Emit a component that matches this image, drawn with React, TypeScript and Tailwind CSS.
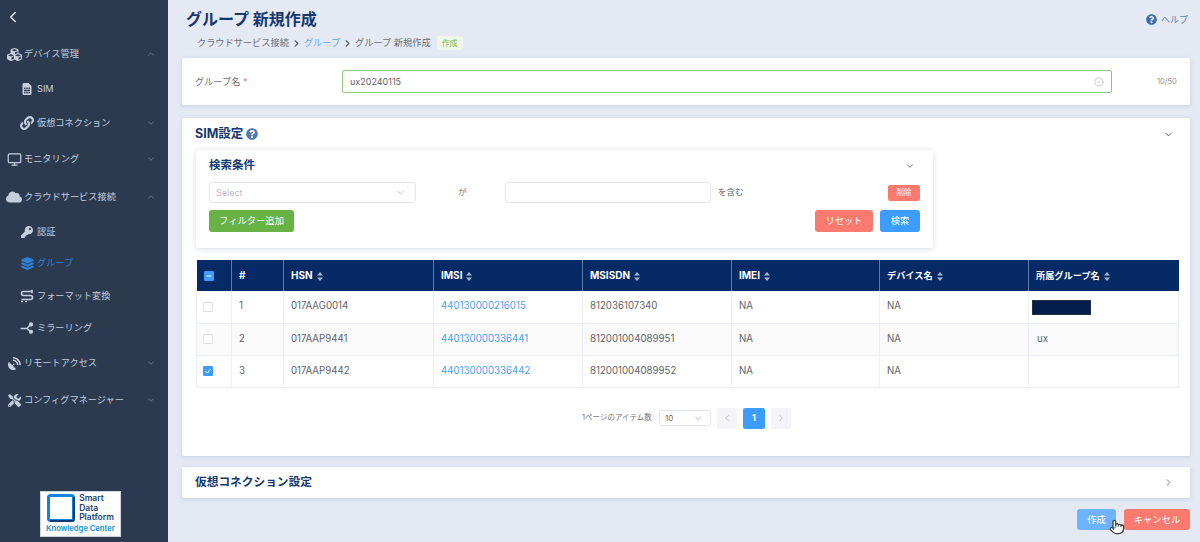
import { ChevronDown, ChevronLeft, ChevronRight, ChevronUp, CircleCheck, Monitor, Pointer } from "lucide-react";
import { FaCloud, FaCubes, FaKey, FaLayerGroup, FaLink, FaQuestionCircle, FaSatelliteDish, FaSimCard, FaTools } from "react-icons/fa";
import type { ReactNode } from "react";

const fontStack = "font-['Inter','Noto_Sans_CJK_JP',sans-serif]";

function FormatIcon() {
  return (
    <svg width="14" height="14" viewBox="0 0 14 14" fill="none" stroke="currentColor" strokeWidth="1.6">
      <path d="M12 2.5H3.5a2 2 0 0 0 0 4h7a2 2 0 0 1 0 4H1.5" />
      <path d="M1 12.5h2M5 12.5h2M12 .8v3.4" />
    </svg>
  );
}

function MirrorIcon() {
  return (
    <svg width="14" height="14" viewBox="0 0 14 14" fill="none" stroke="currentColor" strokeWidth="1.5">
      <path d="M0.5 7.5H7L10.5 3.5M7 7.5l3.5 3" />
      <circle cx="11" cy="3.5" r="1.4" fill="currentColor" />
      <circle cx="11" cy="10.8" r="1.4" fill="currentColor" />
    </svg>
  );
}

const menu: { label: string; icon: ReactNode; h: string; sub?: boolean; open?: boolean; active?: boolean; noArrow?: boolean }[] = [
  { label: "デバイス管理", icon: <FaCubes size={15} />, h: "h-[36px]", open: true },
  { label: "SIM", icon: <FaSimCard size={12} />, h: "h-[34px]", sub: true, noArrow: true },
  { label: "仮想コネクション", icon: <FaLink size={14} />, h: "h-[34px]", sub: true },
  { label: "モニタリング", icon: <Monitor size={15} />, h: "h-[38px]" },
  { label: "クラウドサービス接続", icon: <FaCloud size={16} />, h: "h-[38px]", open: true },
  { label: "認証", icon: <FaKey size={12} />, h: "h-[31px]", sub: true, noArrow: true },
  { label: "グループ", icon: <FaLayerGroup size={13} />, h: "h-[32px]", sub: true, noArrow: true, active: true },
  { label: "フォーマット変換", icon: <FormatIcon />, h: "h-[34px]", sub: true, noArrow: true },
  { label: "ミラーリング", icon: <MirrorIcon />, h: "h-[30px]", sub: true, noArrow: true },
  { label: "リモートアクセス", icon: <FaSatelliteDish size={13} />, h: "h-[40px]" },
  { label: "コンフィグマネージャー", icon: <FaTools size={13} />, h: "h-[34px]" },
];

const columns = [
  { label: "HSN", size: "text-[10px]" },
  { label: "IMSI", size: "text-[10px]" },
  { label: "MSISDN", size: "text-[10px]" },
  { label: "IMEI", size: "text-[10px]" },
  { label: "デバイス名", size: "text-[9.2px]" },
  { label: "所属グループ名", size: "text-[9.2px]" },
];

const rows = [
  { no: 1, hsn: "017AAG0014", imsi: "440130000216015", msisdn: "812036107340", group: "redacted" },
  { no: 2, hsn: "017AAP9441", imsi: "440130000336441", msisdn: "812001004089951", group: "ux" },
  { no: 3, hsn: "017AAP9442", imsi: "440130000336442", msisdn: "812001004089952", group: "", checked: true },
];

function Sidebar() {
  return (
    <aside className="flex h-[542px] w-[168px] shrink-0 flex-col bg-[#2c3a50] text-[#c3cfdf]">
      <div className="mb-[2px] flex h-[34px] items-center pl-[4px] text-[#dfe6ef]">
        <ChevronLeft size={18} />
      </div>
      {menu.map((item) => (
        <div key={item.label} className={`flex items-center ${item.h} ${item.sub ? "pl-[20px]" : "pl-[6px]"} pr-[12px] ${item.active ? "text-[#2f7fd6]" : ""}`}>
          <span className={`flex h-4 shrink-0 items-center justify-center ${item.sub ? "w-[14px]" : "w-[16px]"}`}>{item.icon}</span>
          <span className={`flex-1 text-[9.2px] leading-none ${item.sub ? "pl-[3px]" : "pl-[2px]"}`}>{item.label}</span>
          {!item.noArrow && (item.open ? <ChevronUp size={10} className="text-[#6f7f95]" /> : <ChevronDown size={10} className="text-[#6f7f95]" />)}
        </div>
      ))}
      <div className="flex flex-1 items-end justify-center pb-[5px] pr-[7px]">
        <div className="flex h-[46px] w-[81px] flex-col items-center border border-[#cfd6e0] bg-white pt-[2px]">
          <div className="flex items-center gap-[4px]">
            <svg width="28" height="28" viewBox="0 0 28 28" className="shrink-0">
              <rect x="1.5" y="1.5" width="25" height="25" rx="2" fill="none" stroke="#1484d8" strokeWidth="3" />
              <path d="M27 3v22a2 2 0 0 1-2 2H3" fill="none" stroke="#123a78" strokeWidth="2" />
            </svg>
            <div className="text-[8.5px] font-semibold leading-[9.5px] text-[#1d3f74]">
              Smart<br />Data<br />Platform
            </div>
          </div>
          <div className="mt-[1px] text-[7.6px] font-bold leading-[9px] text-[#2a9ad8]">Knowledge Center</div>
        </div>
      </div>
    </aside>
  );
}

function Select({ value, className }: { value: string; className: string }) {
  return (
    <div className={`flex items-center justify-between rounded-[3px] border border-[#e4e7ed] bg-white ${className}`}>
      {value}
      <ChevronDown size={11} className="text-[#b4b9c2]" />
    </div>
  );
}

function SortIcon() {
  return (
    <svg width="6" height="9" viewBox="0 0 6 9" className="ml-[4px] inline-block fill-[#aab6cb]">
      <path d="M3 0l3 3.4H0zM3 9L0 5.6h6z" />
    </svg>
  );
}

function Check({ state }: { state?: "on" | "partial" }) {
  if (state === "on" || state === "partial") {
    return (
      <span className="flex h-[10px] w-[10px] items-center justify-center rounded-[1px] bg-[#3d9dff]">
        <svg width="8" height="8" viewBox="0 0 8 8" fill="none" stroke="white" strokeWidth="1">
          {state === "on" ? <path d="M1.5 4l2 2 3-4" /> : <path d="M1.5 4h5" />}
        </svg>
      </span>
    );
  }
  return <span className="block h-[10px] w-[10px] rounded-[1px] border border-[#dcdfe6] bg-white" />;
}

function SimTable() {
  return (
    <table className="w-[982px] table-fixed border-collapse text-[9.7px] text-[#5f6368]">
      <colgroup>
        <col className="w-[35px]" />
        <col className="w-[52px]" />
        <col className="w-[150px]" />
        <col className="w-[149px]" />
        <col className="w-[149px]" />
        <col className="w-[148px]" />
        <col className="w-[149px]" />
        <col className="w-[150px]" />
      </colgroup>
      <thead>
        <tr className="h-[31px] bg-[#052a66] text-left text-[10px] font-bold text-white">
          <th className="border-r border-[#5f7aa6] pl-[7px]"><Check state="partial" /></th>
          <th className="border-r border-[#5f7aa6] pl-[7px] font-bold">#</th>
          {columns.map((column) => (
            <th key={column.label} className={`border-r border-[#5f7aa6] pl-[7px] font-bold last:border-r-0 ${column.size}`}>
              {column.label}<SortIcon />
            </th>
          ))}
        </tr>
      </thead>
      <tbody>
        {rows.map((row, index) => (
          <tr key={row.no} className={`h-[32px] border-b border-[#ebeef5] ${index === 1 ? "bg-[#fafafa]" : "bg-white"}`}>
            <td className="border-r border-l border-[#ebeef5] pl-[6px]"><Check state={row.checked ? "on" : undefined} /></td>
            <td className="border-r border-[#ebeef5] pl-[7px]">{row.no}</td>
            <td className="border-r border-[#ebeef5] pl-[7px]">{row.hsn}</td>
            <td className="border-r border-[#ebeef5] pl-[7px] text-[#4d9ff0]">{row.imsi}</td>
            <td className="border-r border-[#ebeef5] pl-[7px]">{row.msisdn}</td>
            <td className="border-r border-[#ebeef5] pl-[7px]">NA</td>
            <td className="border-r border-[#ebeef5] pl-[7px]">NA</td>
            <td className="border-r border-[#ebeef5] pl-[8px]">
              {row.group === "redacted" ? <div className="-ml-[5px] mt-[2px] h-[15px] w-[59px] border border-[#23303f] bg-[#051d4d]" /> : row.group}
            </td>
          </tr>
        ))}
      </tbody>
    </table>
  );
}

export default function App() {
  return (
    <div className={`flex h-[542px] w-[1200px] overflow-hidden bg-[#e4e9f4] ${fontStack}`}>
      <Sidebar />
      <main className="flex h-[542px] flex-1 flex-col pl-[14px] pr-[10px]">
        <div className="relative h-[58px] shrink-0">
          <div className="flex items-center justify-between pl-[4px] pr-[2px] pt-[9px]">
            <h1 className="text-[16px] font-bold leading-[21px] text-[#17386f]">グループ 新規作成</h1>
            <div className="flex items-center gap-[4px] text-[9px] text-[#5f7fb0]">
              <FaQuestionCircle size={11} className="text-[#3f6cad]" />
              ヘルプ
            </div>
          </div>
          <div className="mt-[6px] flex items-center pl-[15px] text-[9.2px] text-[#6a6f78]">
            クラウドサービス接続
            <ChevronRight size={11} strokeWidth={2.5} className="mx-[2px] text-[#5a5f68]" />
            <span className="text-[#5fa8ec]">グループ</span>
            <ChevronRight size={11} strokeWidth={2.5} className="mx-[2px] text-[#5a5f68]" />
            グループ 新規作成
            <span className="ml-[6px] rounded-[2px] bg-[#eef8e8] px-[5px] py-[1px] text-[8px] text-[#74b75a]">作成</span>
          </div>
        </div>

        <section className="flex h-[47px] shrink-0 items-center rounded-[2px] bg-white pl-[13px] shadow-[0_1px_4px_rgba(120,135,165,0.25)]">
          <label className="w-[147px] text-[9.2px] text-[#6a6f78]">
            グループ名 <span className="text-[#f56c6c]">*</span>
          </label>
          <div className="flex h-[23px] w-[770px] items-center justify-between rounded-[2px] border border-[#8cc97a] bg-white pl-[7px] pr-[7px] text-[9px] text-[#5f6368]">
            ux20240115
            <CircleCheck size={10} className="text-[#b9bdc4]" />
          </div>
          <span className="ml-[45px] text-[7.5px] text-[#8a8f98]">10/50</span>
        </section>

        <section className="mt-[13px] h-[338px] shrink-0 rounded-[2px] bg-white pl-[14px] shadow-[0_1px_4px_rgba(120,135,165,0.25)]">
          <div className="-ml-[1px] flex h-[32px] items-center pr-[16px]">
            <h2 className="text-[12.5px] font-bold text-[#17386f]">SIM設定</h2>
            <FaQuestionCircle size={12} className="ml-[3px] text-[#4d78b5]" />
            <ChevronDown size={11} className="ml-auto text-[#555]" />
          </div>
          <div className="h-[98px] w-[737px] rounded-[3px] bg-white px-[13px] shadow-[0_1px_6px_rgba(100,110,130,0.25)]">
            <div className="flex h-[32px] items-center justify-between pr-[5px]">
              <h3 className="text-[11.5px] font-bold text-[#17386f]">検索条件</h3>
              <ChevronDown size={10} className="text-[#666]" />
            </div>
            <div className="flex h-[21px] items-center">
              <Select value="Select" className="h-[21px] w-[207px] pl-[6px] pr-[9px] text-[9px] text-[#b9bdc4]" />
              <span className="w-[89px] pl-[42px] text-[8.5px] text-[#777]">が</span>
              <div className="h-[21px] w-[206px] rounded-[3px] border border-[#e4e7ed]" />
              <span className="ml-[7px] text-[8.5px] text-[#666]">を含む</span>
              <button className="ml-auto h-[16px] w-[32px] rounded-[2px] bg-[#fb7a70] text-[7.5px] text-white">削除</button>
            </div>
            <div className="mt-[7px] flex items-center">
              <button className="h-[22px] w-[85px] rounded-[3px] bg-[#67b346] text-[9.3px] text-white">フィルター追加</button>
              <button className="ml-auto h-[22px] w-[58px] rounded-[3px] bg-[#fb7a70] text-[9.3px] text-white">リセット</button>
              <button className="ml-[7px] h-[22px] w-[40px] rounded-[3px] bg-[#3d9dff] text-[9.3px] text-white">検索</button>
            </div>
          </div>
          <div className="mt-[12px]">
            <SimTable />
          </div>
          <div className="mt-[20px] flex items-center pl-[386px]">
            <span className="w-[77px] text-[7.5px] text-[#777]">1ページのアイテム数</span>
            <Select value="10" className="h-[16px] w-[52px] pl-[5px] pr-[6px] text-[8px] text-[#666]" />
            <span className="ml-[6px] flex h-[21px] w-[20px] items-center justify-center rounded-[2px] bg-[#f4f4f8] text-[#b4b9c2]"><ChevronLeft size={10} /></span>
            <span className="ml-[6px] flex h-[21px] w-[22px] items-center justify-center rounded-[2px] bg-[#3d9dff] text-[9px] font-bold text-white">1</span>
            <span className="ml-[6px] flex h-[21px] w-[20px] items-center justify-center rounded-[2px] bg-[#f4f4f8] text-[#b4b9c2]"><ChevronRight size={10} /></span>
          </div>
        </section>

        <section className="mt-[11px] flex h-[31px] shrink-0 items-center justify-between rounded-[2px] bg-white pl-[13px] pr-[16px] shadow-[0_1px_4px_rgba(120,135,165,0.25)]">
          <h2 className="text-[11.7px] font-bold text-[#17386f]">仮想コネクション設定</h2>
          <ChevronRight size={11} className="text-[#777]" />
        </section>

        <div className="mt-[11px] flex shrink-0 justify-end gap-[8px]">
          <button className="relative h-[21px] w-[39px] rounded-[3px] bg-[#6db3ff] text-[9.3px] text-white">
            作成
            <Pointer size={16} fill="white" className="absolute left-[32px] top-[10px] text-[#444]" />
          </button>
          <button className="h-[21px] w-[66px] rounded-[3px] bg-[#fb7a70] text-[9.3px] text-white">キャンセル</button>
        </div>
      </main>
    </div>
  );
}
